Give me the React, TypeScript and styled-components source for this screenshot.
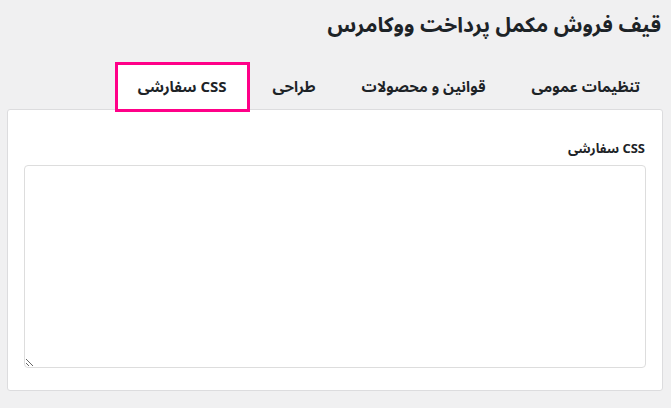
import * as React from "react";
import { useState } from "react";
import styled, { createGlobalStyle } from "styled-components";

const GlobalStyle = createGlobalStyle`
  html, body {
    margin: 0;
    padding: 0;
    background: #f0f0f1;
  }
  body {
    font-family: "Noto Sans Arabic", "Noto Sans", "DejaVu Sans", sans-serif;
    color: #1d2327;
  }
`;

const Page = styled.div`
  direction: rtl;
  padding: 0 8px 0 7px;
  width: 671px;
  box-sizing: border-box;
`;

const Title = styled.h1`
  margin: 0;
  padding: 9px 2px 0 0;
  height: 44px;
  box-sizing: border-box;
  font-size: 21px;
  font-weight: 700;
  line-height: 32px;
  color: #1d2327;
`;

const TabBar = styled.nav`
  display: flex;
  align-items: stretch;
  height: 50px;
  margin-top: 18px;
  margin-bottom: -3px;
  position: relative;
  z-index: 1;
`;

const Tab = styled.a<{ $active?: boolean }>`
  display: flex;
  align-items: center;
  padding: 0 20px 1px;
  border: 3px solid ${(p) => (p.$active ? "#ff0088" : "transparent")};
  background: ${(p) => (p.$active ? "#fff" : "transparent")};
  font-size: 15px;
  font-weight: 700;
  color: #1d2327;
  text-decoration: none;
  cursor: pointer;
  white-space: nowrap;
`;

const Panel = styled.section`
  background: #fff;
  border: 1px solid #dcdcde;
  border-radius: 3px;
  padding: 31px 16px 22px;
`;

const Label = styled.label`
  display: block;
  font-size: 13px;
  font-weight: 700;
  line-height: 16px;
  margin-bottom: 8px;
  padding-right: 1px;
`;

const CodeArea = styled.textarea`
  display: block;
  width: 100%;
  height: 203px;
  box-sizing: border-box;
  border: 1px solid #dddddd;
  border-radius: 4px;
  background: #fff;
  resize: vertical;
  font-family: "Liberation Mono", monospace;
  font-size: 13px;
  outline: none;
`;

const tabs = [
  "تنظیمات عمومی",
  "قوانین و محصولات",
  "طراحی",
  "CSS سفارشی",
];

export default function App() {
  const [active, setActive] = useState(3);
  const [css, setCss] = useState("");

  return (
    <>
      <GlobalStyle />
      <Page>
        <Title>قیف فروش مکمل پرداخت ووکامرس</Title>
        <TabBar>
          {tabs.map((t, i) => (
            <Tab key={t} $active={i === active} onClick={() => setActive(i)}>
              {t}
            </Tab>
          ))}
        </TabBar>
        <Panel>
          <Label htmlFor="custom-css">CSS سفارشی</Label>
          <CodeArea
            id="custom-css"
            dir="rtl"
            value={css}
            onChange={(e) => setCss(e.target.value)}
          />
        </Panel>
      </Page>
    </>
  );
}
